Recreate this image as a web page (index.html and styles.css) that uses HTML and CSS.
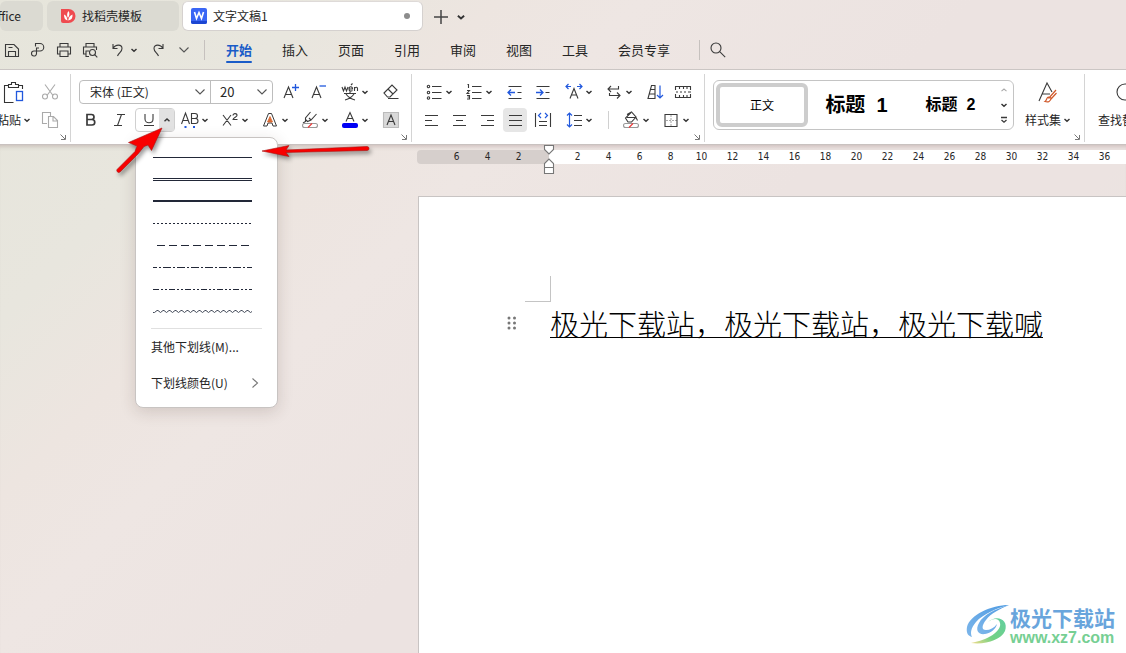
FILE: index.html
```html
<!DOCTYPE html>
<html lang="zh-CN">
<head>
<meta charset="utf-8">
<title>文字文稿1</title>
<link rel="stylesheet" href="styles.css">
</head>
<body>
<svg class="defs" aria-hidden="true">
  <symbol id="chev" viewBox="0 0 8 8"><path d="M1.5 3 4 5.2 6.500 3" fill="none" stroke="#333" stroke-width="1.5"/></symbol>
  <symbol id="wide" viewBox="0 0 12 12"><path d="M1.500 3.500 6 8 10.500 3.500" fill="none" stroke="#555" stroke-width="1.100"/></symbol>
  <symbol id="launch" viewBox="0 0 8 8"><path d="M1.500 1.500 6 6M6.500 2v4.500H2" fill="none" stroke="#777" stroke-width="1"/></symbol>
</svg>

<nav class="tabs">
  <button class="tab tab-first">Office</button>
  <button class="tab tab-shell">
    <svg class="logo" width="16" height="16" viewBox="0 0 16 16"><path d="M1 1h7.500a7 7 0 0 1 0 14H3a2 2 0 0 1-2-2Z" fill="#ef4b50"/><path d="M8.500 3c1.500 2.500 1 4.500-.5 7C6.500 7.500 7 5 8.500 3ZM4 6.500c2 1 3.200 2.500 3.500 6C5 12 4 10 4 6.500ZM12.500 6.500c.3 3.500-1 5.500-4.300 6 .3-3 1.800-5 4.300-6Z" fill="#fff"/></svg>
    <span>找稻壳模板</span>
  </button>
  <button class="tab tab-active">
    <svg class="logo" width="16" height="16" viewBox="0 0 16 16"><rect width="16" height="16" rx="2" fill="#3a66f5"/><path d="M0 13h16v1a2 2 0 0 1-2 2H2a2 2 0 0 1-2-2Z" fill="#1c46d2"/><path d="M3.500 4 5.500 10.500 8 4.500l2.500 6L12.500 4" fill="none" stroke="#fff" stroke-width="1.600"/></svg>
    <span>文字文稿1</span>
    <i class="dot"></i>
  </button>
  <button class="plus" aria-label="新建"><svg width="14" height="14" viewBox="0 0 14 14"><path d="M7 0v14M0 7h14" stroke="#444" stroke-width="1.500"/></svg></button>
  <button class="plain" aria-label="更多"><svg class="c10"><use href="#chev"/></svg></button>
</nav>

<nav class="menubar">
  <div class="quick">
    <button aria-label="保存"><svg width="16" height="16" viewBox="0 0 16 16"><path d="M1.500 2.500h8.500L14.500 7v7.500h-13ZM4.500 14.500V9.500h7v5M4.500 5.500h4"/></svg></button>
    <button aria-label="输出"><svg width="16" height="16" viewBox="0 0 16 16"><path d="M5.500 4.500v-3H10a3.500 3.500 0 0 1 0 7.500H4a2.500 2.500 0 1 0 2.500 2.500V6H9"/></svg></button>
    <button aria-label="打印"><svg width="16" height="16" viewBox="0 0 16 16"><path d="M4 5V1.500h8V5M4 12H1.500V5h13v7H12M4 9h8v5.500H4Z"/></svg></button>
    <button aria-label="打印预览"><svg width="16" height="16" viewBox="0 0 16 16"><path d="M4 5V1.500h8V5M4 12H1.500V5h13v3M4 12V9h3M4 12v2.500h3"/><circle cx="10.500" cy="10.500" r="3"/><path d="m12.700 12.700 2.600 2.600"/></svg></button>
    <button class="split" aria-label="撤销"><svg width="16" height="16" viewBox="0 0 16 16"><path d="M3 2v4.500h4.500M3 6.500C5.500 2 12 2 12 6.500c0 3.500-3 4-4.500 7.500"/></svg><svg class="c8"><use href="#chev"/></svg></button>
    <button aria-label="恢复"><svg width="16" height="16" viewBox="0 0 16 16"><path d="M13 2v4.500H8.500M13 6.500C10.500 2 4 2 4 6.500c0 3.500 3 4 4.500 7.500"/></svg></button>
    <button aria-label="自定义"><svg class="c12"><use href="#wide"/></svg></button>
  </div>
  <i class="bar"></i>
  <button class="menu on">开始</button><button class="menu">插入</button><button class="menu">页面</button><button class="menu">引用</button><button class="menu">审阅</button><button class="menu">视图</button><button class="menu">工具</button><button class="menu">会员专享</button>
  <i class="bar bar-end"></i>
  <button class="search" aria-label="搜索"><svg width="16" height="16" viewBox="0 0 16 16"><circle cx="6" cy="6" r="5"/><path d="m9.700 9.700 5.500 5.500"/></svg></button>
</nav>

<section class="ribbon">
  <div class="group clip">
    <button class="big">
      <svg width="22" height="24" viewBox="0 0 22 24"><path d="M5.500 4.500h-4v17h9M15.500 4.500h4V8M5.500 6.500v-3h3V1.500h4v2h3v3Z" stroke="#333"/><rect x="13.500" y="10.500" width="6" height="9" stroke="#2158dd" stroke-width="1.300"/></svg>
      <span>粘贴<svg class="c8"><use href="#chev"/></svg></span>
    </button>
    <div class="rows">
      <button class="ib off" aria-label="剪切"><svg width="18" height="18" viewBox="0 0 18 18"><path d="M4 1.500 12 12.500M14 1.500 6 12.500"/><circle cx="4" cy="13.500" r="2.500"/><circle cx="14" cy="13.500" r="2.500"/></svg></button>
      <button class="ib off" aria-label="复制"><svg width="18" height="18" viewBox="0 0 18 18"><path d="M6 12.500H1.500v-11h8V5M7.500 5.500h5l4 4v7h-9ZM12 5.500V10h4.500"/></svg></button>
    </div>
    <svg class="launch"><use href="#launch"/></svg>
  </div>

  <div class="group font">
    <div class="rows">
      <div class="row">
        <div class="combos">
          <label class="combo combo-font"><select aria-label="字体"><option>宋体 (正文)</option></select><svg class="c12"><use href="#wide"/></svg></label>
          <label class="combo combo-size"><select aria-label="字号"><option>20</option></select><svg class="c12"><use href="#wide"/></svg></label>
        </div>
        <div class="cluster">
          <button class="ib" aria-label="增大字号"><svg width="18" height="18" viewBox="0 0 18 18"><path d="M2 15 6.500 4 11 15M3.500 11.500h6"/><path d="M13.500 1v7M10 4.500h7" stroke="#2158dd" stroke-width="1.300"/></svg></button>
          <button class="ib" aria-label="减小字号"><svg width="18" height="18" viewBox="0 0 18 18"><path d="M2 15 6.500 4 11 15M3.500 11.500h6"/><path d="M9.500 3H16" stroke="#2158dd" stroke-width="1.300"/></svg></button>
        </div>
        <button class="ib dd" aria-label="拼音指南"><svg width="18" height="18" viewBox="0 0 18 18"><path d="m1 4 1.500 4L4 4l1.500 4L7 4M8 6h3.500c0-3-3.500-3-3.500 0s2.500 2 3.500 1.500M13.500 8V4M13.500 5.500c1-2 3-1.500 3 0V8M10 2l1.500-1.500M3 10.500h12M9 8.500v2M5 11c2 3 5 5 9 6M13 11c-2 3-5 5-9 6"/></svg><svg class="c8"><use href="#chev"/></svg></button>
        <button class="ib" aria-label="清除格式"><svg width="18" height="18" viewBox="0 0 18 18"><path d="M2 10 10 2l5 5-7 7H5.500ZM6 6l5 5M6 15.500h10.500"/></svg></button>
      </div>
      <div class="row row2">
        <div class="cluster">
          <button class="ib" aria-label="加粗"><svg width="18" height="18" viewBox="0 0 18 18"><path d="M5 3.500h4.500a2.500 2.500 0 0 1 0 5H5ZM5 8.500h5a2.700 2.700 0 0 1 0 5.500H5Z" stroke-width="1.700"/></svg></button>
          <button class="ib" aria-label="倾斜"><svg width="18" height="18" viewBox="0 0 18 18"><path d="M7 3.500h8M4 14.500h8M11.500 3.500 7.500 14.500"/></svg></button>
        </div>
        <div class="cluster">
          <div class="under">
            <button class="u-main" aria-label="下划线"><svg width="14" height="16" viewBox="0 0 14 16"><path d="M3 2v5c0 5 8 5 8 0V2M2 13.500h10"/></svg></button>
            <button class="u-drop" aria-label="下划线类型"><svg width="8" height="8" viewBox="0 0 8 8"><path d="M1.500 5.200 4 3l2.500 2.200" stroke-width="1.500"/></svg></button>
            <div class="pop">
              <button class="line" aria-label="单线"><svg viewBox="0 0 99 8"><path d="M0 4.500h99"/></svg></button>
              <button class="line" aria-label="双线"><svg viewBox="0 0 99 8"><path d="M0 3.500h99M0 5.500h99"/></svg></button>
              <button class="line" aria-label="粗线"><svg viewBox="0 0 99 8"><path d="M0 4h99" stroke-width="2"/></svg></button>
              <button class="line" aria-label="点线"><svg viewBox="0 0 99 8"><path d="M0 4.500h99" stroke-dasharray="2 2"/></svg></button>
              <button class="line" aria-label="虚线"><svg viewBox="0 0 99 8"><path d="M4 4.500h92" stroke-dasharray="8 4"/></svg></button>
              <button class="line" aria-label="点划线"><svg viewBox="0 0 99 8"><path d="M0 4.500h99" stroke-dasharray="8 2 2 2" stroke-dashoffset="4"/></svg></button>
              <button class="line" aria-label="双点划线"><svg viewBox="0 0 99 8"><path d="M0 4.500h99" stroke-dasharray="6 2 2 2 2 2"/></svg></button>
              <button class="line" aria-label="波浪线"><svg viewBox="0 0 99 8"><path d="M0 5.500 1.500 5.500 4 3.500h1l2.500 2L10 3.500h1l2.500 2L16 3.500h1l2.500 2L22 3.500h1l2.500 2L28 3.500h1l2.500 2L34 3.500h1l2.500 2L40 3.500h1l2.500 2L46 3.500h1l2.500 2L52 3.500h1l2.500 2L58 3.500h1l2.500 2L64 3.500h1l2.500 2L70 3.500h1l2.500 2L76 3.500h1l2.500 2L82 3.500h1l2.500 2L88 3.500h1l2.500 2L94 3.500h1l2.500 2L99 4.500" stroke="#454c5b"/></svg></button>
              <hr>
              <button class="mi">其他下划线(M)...</button>
              <button class="mi">下划线颜色(U)<svg width="12" height="12" viewBox="0 0 12 12"><path d="m2.500 1.500 5 4.500-5 4.500" stroke="#777"/></svg></button>
            </div>
          </div>
          <button class="ib dd" aria-label="着重号"><svg width="18" height="18" viewBox="0 0 18 18"><path d="m.5 13 4-11 4 11M2 9.500h5M10.500 2.500H14a2.400 2.400 0 0 1 0 5h-3.500ZM10.500 7.500h4a2.500 2.500 0 0 1 0 5h-4Z"/><path d="M3.500 16h2M12 16h2" stroke="#2158dd" stroke-width="2"/></svg><svg class="c8"><use href="#chev"/></svg></button>
          <button class="ib dd" aria-label="上标"><svg width="18" height="18" viewBox="0 0 18 18"><path d="m2 4 8 10.500M10 4 2 14.500M12 4.500c0-2.500 4-2.500 4 0 0 1.500-4 2-4 4h4.500"/></svg><svg class="c8"><use href="#chev"/></svg></button>
          <button class="ib dd" aria-label="文字效果"><svg width="18" height="18" viewBox="0 0 18 18"><path d="M7.500 2.500h3L15.500 15H12l-1-3H7l-1 3H2.500Z" stroke-width="1"/><path d="M9 5.500 11.500 11h-5Z" fill="#d96a32" stroke="#d96a32" stroke-width=".8"/></svg><svg class="c8"><use href="#chev"/></svg></button>
          <button class="ib dd" aria-label="突出显示"><svg width="18" height="18" viewBox="0 0 18 18"><path d="m9.500 1-5 6v3.500L2 12M15.500 3 10 9l-3.500 1.500L4.500 8.500M8 7l2 2"/><rect x="1.500" y="12.500" width="15" height="4" rx="2" stroke="#999"/><path d="m7 16.500 4-4" stroke="#e33"/></svg><svg class="c8"><use href="#chev"/></svg></button>
          <button class="ib dd" aria-label="字体颜色"><svg width="18" height="18" viewBox="0 0 18 18"><path d="m5 10.500 4-9 4 9M6.500 7.500h5"/><rect x="1" y="12" width="16" height="5" rx="2" fill="#0000f5" stroke="none"/></svg><svg class="c8"><use href="#chev"/></svg></button>
        </div>
        <button class="ib" aria-label="字符底纹"><svg width="18" height="18" viewBox="0 0 18 18"><path d="M1.500 1.500h15v15h-15Z" fill="#d9d9d9" stroke="#bbb"/><path d="M5 14 9 4l4 10M6.500 10.500h5"/></svg></button>
      </div>
    </div>
    <svg class="launch"><use href="#launch"/></svg>
  </div>

  <div class="group para">
    <div class="rows">
      <div class="row bullets-row">
        <div class="cluster">
          <button class="ib dd" aria-label="项目符号"><svg width="18" height="18" viewBox="0 0 18 18"><circle cx="3.500" cy="3.500" r="1.200"/><circle cx="3.500" cy="9.500" r="1.200"/><circle cx="3.500" cy="15" r="1.200"/><path d="M7 3.500h9.500M7 9.500h9.500M7 15.500h9.500"/></svg><svg class="c8"><use href="#chev"/></svg></button>
          <button class="ib dd" aria-label="编号"><svg width="18" height="18" viewBox="0 0 18 18"><path d="M2.500 1.500h1V5M2 7.500h2.500L2 10.500h2.500M2 12.500h2.500V16H2M2.500 14h2M7 3.500h9.500M7 9.500h9.500M7 15.500h9.500"/></svg><svg class="c8"><use href="#chev"/></svg></button>
        </div>
        <div class="cluster">
          <button class="ib" aria-label="减少缩进"><svg width="18" height="18" viewBox="0 0 18 18"><path d="M2.500 3.500h13M11.500 9.500h4M2.500 15.500h13"/><path d="M9 9.500H2M5 6.500l-3 3 3 3" stroke="#2158dd" stroke-width="1.300"/></svg></button>
          <button class="ib" aria-label="增加缩进"><svg width="18" height="18" viewBox="0 0 18 18"><path d="M2.500 3.500h13M11.500 9.500h4M2.500 15.500h13"/><path d="M2 9.500h7M6 6.500l3 3-3 3" stroke="#2158dd" stroke-width="1.300"/></svg></button>
        </div>
        <div class="cluster">
          <button class="ib dd" aria-label="字符缩放"><svg width="18" height="18" viewBox="0 0 18 18"><path d="m5 15.500 4-10 4 10M6.500 12h5"/><path d="M6 3.500H1M3.500 1 1 3.500 3.500 6M12 3.500h5M14.500 1 17 3.500 14.500 6" stroke="#2158dd" stroke-width="1.200"/></svg><svg class="c8"><use href="#chev"/></svg></button>
          <button class="ib dd" aria-label="换行"><svg width="18" height="18" viewBox="0 0 18 18"><path d="M6 3 3 6l3 3M3 6h10.500V3M4.500 10v2.500H15M12 9.500l3 3-3 3"/></svg><svg class="c8"><use href="#chev"/></svg></button>
        </div>
        <div class="cluster">
          <button class="ib" aria-label="排序"><svg width="18" height="18" viewBox="0 0 18 18"><path d="M2 15.500 5.500 2.500H9v13ZM4.500 6.500H9M3.500 11H9"/><path d="M14 2.500v12.500M11 12l3 3 3-3" stroke="#2158dd" stroke-width="1.200"/></svg></button>
          <button class="ib" aria-label="表格框"><svg width="18" height="18" viewBox="0 0 18 18"><path d="M1.500 7V3.500h15V7M1.500 11v3.500h15V11M5.500 3.500V6M9.500 3.500V6M13 3.500V6M5.500 14.500V12M9.500 14.500V12M13 14.500V12M2 9h2M6 9h2M10 9h2M14 9h3"/></svg></button>
        </div>
      </div>
      <div class="row">
        <div class="cluster">
          <button class="ib" aria-label="左对齐"><svg width="18" height="18" viewBox="0 0 18 18"><path d="M3 4.500h13M3 9.500h7M3 14.500h13"/></svg></button>
          <button class="ib" aria-label="居中"><svg width="18" height="18" viewBox="0 0 18 18"><path d="M3 4.500h13M6 9.500h7M3 14.500h13"/></svg></button>
          <button class="ib" aria-label="右对齐"><svg width="18" height="18" viewBox="0 0 18 18"><path d="M3 4.500h13M9 9.500h7M3 14.500h13"/></svg></button>
          <button class="ib pressed" aria-label="两端对齐"><svg width="18" height="18" viewBox="0 0 18 18"><path d="M3 4.500h13M3 9.500h13M3 14.500h13"/></svg></button>
          <button class="ib" aria-label="分散对齐"><svg width="18" height="18" viewBox="0 0 18 18"><path d="M1.500 2v14M16.500 2v14M5 10.500h8M5 14.500h8"/><path d="M7 2 4.500 4.500 7 7M11 2l2.500 2.500L11 7" stroke="#2158dd" stroke-width="1.200"/></svg></button>
        </div>
        <button class="ib dd" aria-label="行距"><svg width="18" height="18" viewBox="0 0 18 18"><path d="M9 4.500h8M9 9.500h8M9 14.500h8"/><path d="M4.500 2v14M2 4.500 4.500 2 7 4.500M2 13.500 4.500 16 7 13.500" stroke="#2158dd" stroke-width="1.200"/></svg><svg class="c8"><use href="#chev"/></svg></button>
        <i class="mini"></i>
        <div class="cluster">
          <button class="ib dd" aria-label="底纹颜色"><svg width="18" height="18" viewBox="0 0 18 18"><path d="M5 3.500 9.500 1l4.500 5-4.500 5H6L3.500 7 9 1.500M5 6.500h9l1.500 3"/><rect x="1.500" y="12.500" width="15" height="4" rx="2" stroke="#999"/><path d="m7 16.500 4-4" stroke="#e33"/></svg><svg class="c8"><use href="#chev"/></svg></button>
          <button class="ib dd" aria-label="边框"><svg width="18" height="18" viewBox="0 0 18 18"><path d="M9 4v11M4 9.500h11" stroke="#aaa" stroke-dasharray="2 1"/><path d="M3 3.500h12v12H3Z"/></svg><svg class="c8"><use href="#chev"/></svg></button>
        </div>
      </div>
    </div>
    <svg class="launch"><use href="#launch"/></svg>
  </div>

  <div class="group styles">
    <div class="gallery">
      <button class="st st-on">正文</button>
      <button class="st st-h1">标题&nbsp; 1</button>
      <button class="st st-h2">标题&nbsp; 2</button>
      <div class="scroll">
        <svg width="8" height="8" viewBox="0 0 8 8"><path d="M1.500 5.200 4 3l2.500 2.200" stroke="#aaa"/></svg>
        <svg class="c8"><use href="#chev"/></svg>
        <svg width="8" height="8" viewBox="0 0 8 8"><path d="M1 1.500h6M1.500 4 4 6.200 6.500 4" stroke-width="1.300"/></svg>
      </div>
    </div>
    <button class="big">
      <svg width="22" height="24" viewBox="0 0 22 24"><path d="m2 20 8-18 5 9M5.500 13H13"/><path d="m19 9-7.500 8.500M19.500 12 14 18M11.500 16c-2 0-1.500 3.500-3.500 4.500 3 1 6 0 6-3.500Z" stroke="#d0592b" stroke-width="1.200"/></svg>
      <span>样式集<svg class="c8"><use href="#chev"/></svg></span>
    </button>
    <svg class="launch"><use href="#launch"/></svg>
  </div>

  <div class="group find">
    <button class="big">
      <svg width="22" height="24" viewBox="0 0 22 24"><circle cx="14" cy="11" r="8"/><path d="m19 17 3 4"/></svg>
      <span>查找替换</span>
    </button>
  </div>
</section>

<main class="work">
  <div class="ruler">
    <div class="neg"><span>6</span><span>4</span><span>2</span></div>
    <div class="pos"><span>2</span><span>4</span><span>6</span><span>8</span><span>10</span><span>12</span><span>14</span><span>16</span><span>18</span><span>20</span><span>22</span><span>24</span><span>26</span><span>28</span><span>30</span><span>32</span><span>34</span><span>36</span>
      <svg class="indent" width="12" height="30" viewBox="0 0 12 30"><path d="M1.500 1.500h9v4L6 10 1.500 5.500ZM1.500 23.500v-4L6 15l4.500 4.500v4ZM1.500 23.500h9v6h-9Z" fill="#fff" stroke="#777"/></svg>
    </div>
  </div>
  <article class="page">
    <i class="corner"></i>
    <div class="para-line">
      <svg class="grip" width="10" height="14" viewBox="0 0 10 14"><g fill="#777" stroke="none"><circle cx="2" cy="2" r="1.500"/><circle cx="7.500" cy="2" r="1.500"/><circle cx="2" cy="7" r="1.500"/><circle cx="7.500" cy="7" r="1.500"/><circle cx="2" cy="12" r="1.500"/><circle cx="7.500" cy="12" r="1.500"/></g></svg>
      <p>极光下载站，极光下载站，极光下载喊</p>
    </div>
  </article>
</main>

<aside class="mark">
  <svg width="44" height="42" viewBox="0 0 44 42">
    <defs><linearGradient id="mb" x1="1" y1="0" x2="0" y2="1"><stop offset="0" stop-color="#4f9be2"/><stop offset="1" stop-color="#7db6ea"/></linearGradient><linearGradient id="mg" x1="1" y1="0" x2="0" y2="1"><stop offset="0" stop-color="#62cfa0"/><stop offset=".6" stop-color="#72d184"/><stop offset="1" stop-color="#f4dc8a"/></linearGradient></defs>
    <path d="M43 1C25 1 4 11 1 23c-1 6 1 9 5 10-2-4-1-9 4-15C17 10 31 4 43 1Z" fill="url(#mb)" stroke="none"/>
    <path d="M43 1C29 5 17 11 13 19c-4 7-1 12 6 11 6-1 11-5 12-10-3 4-7 6-11 6-5 0-4-5 0-10C25 9 34 5 43 1Z" fill="url(#mb)" stroke="none"/>
    <path d="M22 18c5-4 11-4 12 1 2 8-12 17-29 20 14 2 30-3 34-12 4-11-8-17-17-9Z" fill="url(#mg)" stroke="none"/>
  </svg>
  <div><b>极光下载站</b><span>www.xz7.com</span></div>
</aside>

<svg class="arrows" width="270" height="60" viewBox="0 0 270 60" aria-hidden="true">
  <g fill="#f80000" stroke="#a81010" stroke-width=".6"><path d="M4 42.500 22 24.500l2-5.500-8.500-3.500L49 1 38.500 23.500 35 18l-4 1.500L25 27 7 45a2 2 0 0 1-3-2.500Z"/><path d="M149 24 176 18.500l-3 4.500 81-3.500a1.500 1.500 0 0 1 0 4l-81 2 3 4Z"/></g>
</svg>
</body>
</html>
```
FILE: styles.css
```css
* { box-sizing: border-box; }
body {
  margin: 0;
  height: 100vh;
  overflow: hidden;
  position: relative;
  display: flex;
  flex-direction: column;
  font: 12px/16px "Noto Sans CJK SC", sans-serif;
  color: #262626;
  background: linear-gradient(135deg, #e6e5db 0%, #e8e6de 18%, #ede5e0 28%, #eee6e3 36%, #ece3e1 55%, #ece3e1 72%, #e8e6e1 88%);
}
button { border: 0; padding: 0; margin: 0; background: none; font: inherit; color: inherit; white-space: nowrap; }
svg { fill: none; stroke: #3a3a3a; stroke-width: 1.1; flex: none; display: block; }
.logo { stroke: none; }
.off svg { stroke: #aaa; }
.defs { position: absolute; width: 0; height: 0; }
.c8 { width: 8px; height: 8px; }
.c10 { width: 10px; height: 10px; }
.c12 { width: 12px; height: 12px; }

/* document tabs */
.tabs { display: flex; height: 32px; padding-top: 1px; flex: none; }
.tab { height: 30px; border-radius: 6px; background: #dbdad2; display: flex; align-items: center; gap: 6px; }
.tab-first { width: 43px; justify-content: flex-end; padding-right: 22px; margin-right: 4px; overflow: hidden; }
.tab-shell { width: 132px; padding-left: 13px; margin-right: 3px; }
.tab-active { width: 241px; padding: 0 12px 0 8px; background: #fff; border: 1px solid #d5d1cf; border-top-color: #dedad8; }
.tab-active span { flex: 1; text-align: left; }
.dot { width: 6px; height: 6px; border-radius: 50%; background: #8c8c8c; }
.plus { margin-left: 11px; }
.plain { margin-left: 8px; }

/* menu bar */
.menubar { display: flex; align-items: center; height: 36px; margin-bottom: 1px; flex: none; font-size: 13px; }
.quick { display: flex; align-items: center; padding-left: 4px; gap: 10px; }
.quick .split { display: flex; align-items: center; gap: 4px; margin-left: 2px; margin-right: 2px; }
.quick .c12 { margin-left: 2px; }
.bar { width: 1px; height: 20px; background: #c6c1be; margin: 0 6px 0 14px; }
.menu { height: 26px; padding: 0 15px; position: relative; }
.menu.on { color: #1a5cc8; font-weight: 700; }
.menu.on::after { content: ""; position: absolute; left: 15px; right: 15px; bottom: 0; height: 2px; border-radius: 1px; background: #1a5cc8; }
.bar-end { margin: 0 10px 0 14px; }

/* ribbon */
.ribbon { display: flex; flex: none; height: 76px; padding: 4px 0 2px; background: #fff; border-top: 1px solid #cbc6c4; border-bottom: 1px solid #c9c2c0; }
.group { position: relative; display: flex; flex: none; padding-top: 4px; border-right: 1px solid #d4d4d4; }
.rows { display: flex; flex-direction: column; }
.row { display: flex; align-items: center; gap: 2px; }
.cluster { display: flex; }
.ib { width: 28px; height: 28px; display: flex; align-items: center; justify-content: center; }
.dd { width: 40px; gap: 2px; }
.pressed { position: relative; z-index: 0; }
.pressed::before { content: ""; position: absolute; inset: 2px; border-radius: 4px; background: #e6e6e6; z-index: -1; }
.launch { position: absolute; right: 3px; bottom: 1px; width: 8px; height: 8px; }
.big { display: flex; flex-direction: column; align-items: center; gap: 7px; padding-top: 3px; height: 56px; }
.big span { display: flex; align-items: center; gap: 2px; }

.clip { width: 71px; justify-content: flex-end; gap: 5px; padding-right: 6px; }
.font { width: 341px; padding-left: 6px; }
.combos { display: flex; height: 24px; width: 194px; margin: 2px 2px 2px 2px; border: 1px solid #bdbdbd; border-radius: 4px; }
.combo { display: flex; align-items: center; padding-right: 4px; }
.combo select { appearance: none; border: 0; background: none; padding: 0; flex: 1; min-width: 0; font: inherit; color: inherit; outline: 0; }
.combo-font { width: 131px; padding-left: 10px; border-right: 1px solid #bdbdbd; }
.combo-size { flex: 1; padding-left: 9px; font-size: 13px; }

.under { position: relative; width: 40px; height: 24px; margin: 2px 0; display: flex; border: 1px solid #d0d0d0; border-radius: 4px; }
.under > button { display: flex; align-items: center; justify-content: center; }
.u-main { width: 23px; padding-left: 3px; }
.u-drop { flex: 1; background: #e2e2e2; }
.pop { position: absolute; z-index: 5; left: -1px; top: 28px; width: 143px; padding: 8px 15px 6px; display: flex; flex-direction: column; background: #fff; border: 1px solid #c8c4c2; border-radius: 8px; box-shadow: 0 4px 16px rgba(60, 40, 30, .16); }
.line { height: 22px; padding-left: 2px; }
.line svg { width: 99px; height: 8px; stroke: #222838; stroke-width: 1; }
.pop hr { width: 100%; height: 1px; border: 0; background: #e0e0e0; margin: 6px 0 0; }
.mi { height: 36px; display: flex; align-items: center; justify-content: space-between; }

.para { width: 293px; padding-left: 5px; }
.bullets-row { padding-left: 2px; }
.mini { width: 1px; height: 18px; background: #d0d0d0; margin: 0 5px 0 7px; }

.styles { width: 380px; padding: 6px 0 0 8px; }
.styles .big { margin-left: 11px; margin-top: -2px; }
.gallery { width: 301px; height: 50px; display: flex; padding: 2px; border: 1px solid #c4c4c4; border-radius: 6px; }
.st { flex: none; color: #000; }
.st-on { width: 92px; border: 4px solid #cdcdcd; border-radius: 6px; }
.st-h1 { width: 97px; font: bold 20px/24px "Liberation Sans", "Noto Sans CJK SC", sans-serif; }
.st-h2 { width: 91px; font: bold 16px/20px "Liberation Sans", "Noto Sans CJK SC", sans-serif; }
.scroll { flex: 1; display: flex; flex-direction: column; justify-content: space-between; align-items: center; padding: 3px 0; }
.find { border: 0; padding-left: 13px; }

/* work area */
.work { flex: 1; padding-left: 417px; display: flex; flex-direction: column; box-shadow: inset 0 5px 5px -4px rgba(90, 50, 50, .25); }
.ruler { display: flex; flex: none; height: 14px; margin-top: 5px; font: 10px/14px "DejaVu Sans Condensed", "DejaVu Sans", sans-serif; }
.ruler span { width: 31px; text-align: center; flex: none; }
.neg { width: 132px; display: flex; justify-content: flex-end; padding-right: 15px; background: #d6cfcc; border-radius: 4px 0 0 4px; }
.pos { flex: 1; min-width: 0; display: flex; padding-left: 13px; background: #fff; position: relative; }
.indent { position: absolute; left: -6px; top: -6px; }
.page { flex: 1; margin: 32px 0 0 1px; padding: 79px 0 0 88px; background: #fff; border: solid #c8c4c3; border-width: 1px 0 0 1px; display: flex; flex-direction: column; }
.corner { width: 26px; height: 26px; margin-left: 18px; border: solid #c4c4c4; border-width: 0 1px 1px 0; flex: none; }
.para-line { display: flex; align-items: center; gap: 33px; margin-top: 6px; }
.para-line p { margin: 0; height: 30px; font-size: 29px; line-height: 31px; font-weight: 300; color: #000; white-space: nowrap; border-bottom: 1px solid #000; }

.mark { position: absolute; right: 11px; bottom: 7px; display: flex; align-items: center; }
.mark div { display: flex; flex-direction: column; }
.mark b { font-size: 21px; line-height: 26px; color: #69a5dc; }
.mark span { font: bold 16px/16px "Liberation Sans", sans-serif; color: #76cf93; }
.arrows { position: absolute; left: 113px; top: 127px; z-index: 9; pointer-events: none; filter: drop-shadow(2px 3px 2px rgba(0, 0, 0, .4)); }
```
